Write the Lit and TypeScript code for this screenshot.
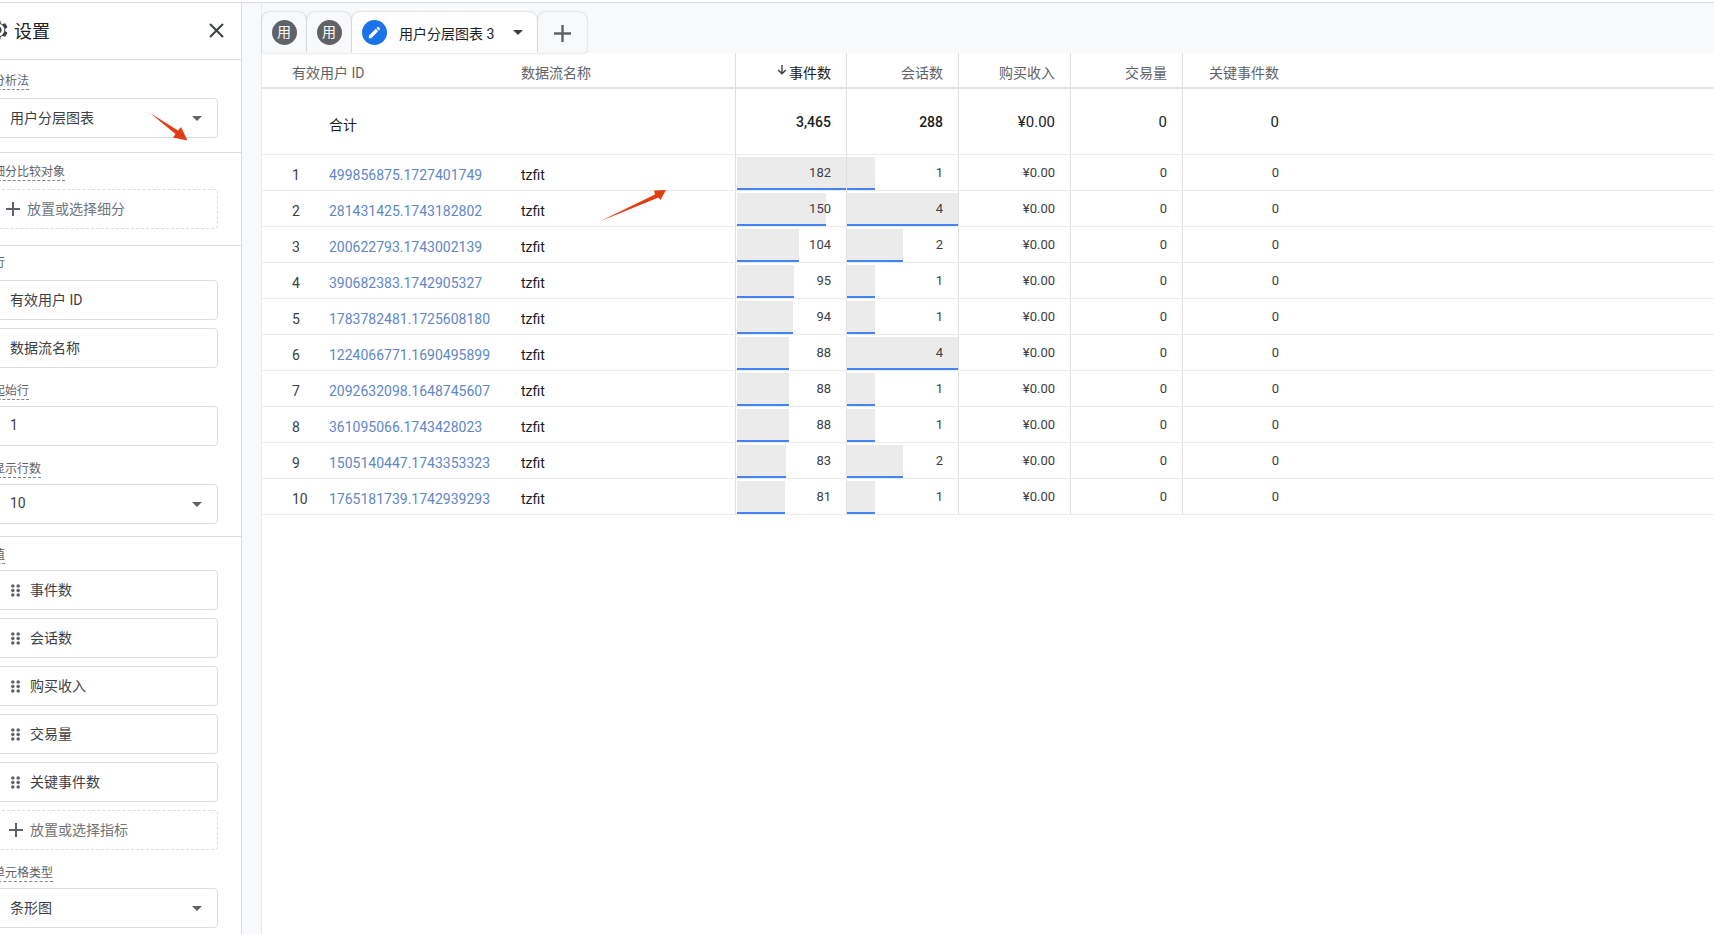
import { LitElement, html, css, svg } from "lit";
import { customElement } from "lit/decorators.js";

const rows: [string, number, number][] = [
  ["499856875.1727401749", 182, 1],
  ["281431425.1743182802", 150, 4],
  ["200622793.1743002139", 104, 2],
  ["390682383.1742905327", 95, 1],
  ["1783782481.1725608180", 94, 1],
  ["1224066771.1690495899", 88, 4],
  ["2092632098.1648745607", 88, 1],
  ["361095066.1743428023", 88, 1],
  ["1505140447.1743353323", 83, 2],
  ["1765181739.1742939293", 81, 1],
];

const caret = html`<svg class="caret" width="10" height="5" viewBox="0 0 10 5"><path d="M0 0h10L5 5z" fill="currentColor"/></svg>`;
const plus = html`<svg class="plus" width="14" height="14" viewBox="0 0 14 14"><path d="M6 0h2v6h6v2H8v6H6V8H0V6h6z" fill="currentColor"/></svg>`;
const grip = html`<svg class="grip" width="9" height="13" viewBox="0 0 9 13" fill="#5f6368">
  ${[2, 6.5, 11].map((y) => svg`<circle cx="1.8" cy="${y}" r="1.8"/><circle cx="7.2" cy="${y}" r="1.8"/>`)}
</svg>`;
const gear = html`<svg class="gear" width="24" height="24" viewBox="0 0 24 24"><path fill="#3c4043" d="M19.14 12.94c.04-.3.06-.61.06-.94 0-.32-.02-.64-.07-.94l2.03-1.58c.18-.14.23-.41.12-.61l-1.92-3.32c-.12-.22-.37-.29-.59-.22l-2.39.96c-.5-.38-1.03-.7-1.62-.94l-.36-2.54c-.04-.24-.24-.41-.48-.41h-3.84c-.24 0-.43.17-.47.41l-.36 2.54c-.59.24-1.13.57-1.62.94l-2.39-.96c-.22-.08-.47 0-.59.22L2.74 8.87c-.12.21-.08.47.12.61l2.03 1.58c-.05.3-.09.63-.09.94s.02.64.07.94l-2.03 1.58c-.18.14-.23.41-.12.61l1.92 3.32c.12.22.37.29.59.22l2.39-.96c.5.38 1.03.7 1.62.94l.36 2.54c.05.24.24.41.48.41h3.84c.24 0 .44-.17.47-.41l.36-2.54c.59-.24 1.13-.56 1.62-.94l2.39.96c.22.08.47 0 .59-.22l1.92-3.32c.12-.22.07-.47-.12-.61l-2.01-1.58z"/><circle cx="12" cy="12" r="6.4" fill="#fff"/><circle cx="12" cy="12" r="3.6" fill="#3c4043"/><circle cx="12" cy="12" r="1.8" fill="#fff"/></svg>`;

@customElement("app-root")
export class AppRoot extends LitElement {
  static styles = css`
    :host {
      display: block;
      width: 1714px;
      height: 934px;
      overflow: hidden;
      position: relative;
      background: #fff;
      font-family: Roboto, "Noto Sans CJK SC", sans-serif;
      font-size: 14px;
      color: #3c4043;
    }
    .page {
      display: flex;
      height: 931px;
      margin-top: 2px;
      border-top: 1px solid #dadce0;
    }
    .sidebar {
      width: 241px;
      flex: none;
      overflow: hidden;
      border-right: 1px solid #dadce0;
      background: #fff;
    }
    .inner {
      margin-left: -7px;
      width: 225px;
      padding-right: 23px;
    }
    .head {
      height: 54px;
      padding-bottom: 2px;
      display: flex;
      align-items: center;
      gap: 4px;
      margin-right: -23px;
      padding-right: 17px;
      border-bottom: 1px solid #dadce0;
      font-size: 18px;
      color: #202124;
    }
    .gear {
      margin-left: -7px;
      flex: none;
    }
    .close {
      margin-left: auto;
      flex: none;
    }
    .sec {
      margin-right: -23px;
      padding-right: 23px;
      border-bottom: 1px solid #dadce0;
    }
    .sec:last-child {
      border-bottom: 0;
    }
    .label {
      display: block;
      width: fit-content;
      height: 16px;
      line-height: 16px;
      font-size: 12px;
      color: #5f6368;
      border-bottom: 1px dashed #80868b;
    }
    .label.plain {
      border-bottom: 1px solid transparent;
    }
    .s1 { padding-top: 13px; padding-bottom: 14px; }
    .s2 { padding-top: 11px; padding-bottom: 16px; }
    .s3 { padding-top: 9px; padding-bottom: 12px; }
    .s4 { padding-top: 10px; }
    .box {
      box-sizing: border-box;
      height: 40px;
      display: flex;
      align-items: center;
      padding: 0 15px 3px 16px;
      border: 1px solid #dadce0;
      border-radius: 4px;
      margin-top: 8px;
      color: #3c4043;
    }
    .box.dash {
      border-style: dashed;
      color: #70757a;
    }
    .box.lead { margin-top: 6px; }
    .box.tight { margin-top: 6px; }
    .label.gap { margin-top: 15px; }
    .caret {
      margin-left: auto;
      margin-top: 3px;
      color: #5f6368;
      flex: none;
    }
    .plus {
      color: #5f6368;
      margin: 3px 7px 0 -4px;
      flex: none;
    }
    .box.metric .plus {
      margin-left: -1px;
    }
    .grip {
      margin: 3px 10px 0 1px;
      flex: none;
    }
    .gutter {
      width: 19px;
      flex: none;
      background: #f8f9fa;
    }
    .main {
      flex: 1;
      min-width: 0;
      border-left: 1px solid #e8eaed;
    }
    .tabs {
      height: 50px;
      box-sizing: border-box;
      padding-top: 9px;
      display: flex;
      gap: 1px;
      background: #f8f9fa;
    }
    .tab {
      box-sizing: border-box;
      height: 41px;
      width: 44px;
      display: flex;
      align-items: center;
      justify-content: center;
      border-radius: 8px 8px 0 0;
      background: #f8f9fa;
      box-shadow: 0 0 2px rgba(60, 64, 67, 0.35);
    }
    .tab.active {
      width: 185px;
      background: #fff;
      justify-content: flex-start;
      padding-left: 10px;
      color: #202124;
    }
    .tab.add {
      width: 49px;
      color: #5f6368;
      border-radius: 8px 8px 4px 0;
    }
    .tab.add svg {
      width: 17px;
      height: 17px;
      margin: 2px 0 0;
    }
    .badge {
      width: 25px;
      height: 25px;
      border-radius: 50%;
      background: #5f6368;
      color: #fff;
      font-size: 14px;
      line-height: 25px;
      text-align: center;
      flex: none;
    }
    .badge.blue {
      background: #1a73e8;
      display: flex;
      align-items: center;
      justify-content: center;
    }
    .tabname {
      margin-left: 12px;
      line-height: 20px;
      padding-top: 2px;
    }
    .tab.active .caret {
      margin-left: 19px;
      margin-top: 0;
      color: #3c4043;
    }
    .row {
      display: grid;
      grid-template-columns: 30px 37px 192px 214px 111px 112px 112px 112px 112px 1fr;
      box-sizing: border-box;
      height: 36px;
      border-bottom: 1px solid #ebebeb;
    }
    .row.header {
      border-bottom: 2px solid #e4e4e4;
      color: #5f6368;
    }
    .row.total {
      height: 66px;
      color: #202124;
    }
    .c {
      display: flex;
      align-items: center;
      white-space: nowrap;
      min-width: 0;
      position: relative;
      box-sizing: border-box;
    }
    .span-id { grid-column: 1 / 4; padding-left: 30px; }
    .span-tot { grid-column: 2 / 5; padding-left: 37px; padding-top: 4px; }
    .txt { padding-top: 4px; }
    .row.header .c { padding-top: 4px; }
    .idxv { color: #3c4043; }
    .link { color: #5f87c8; }
    .strm { color: #202124; }
    .num {
      justify-content: flex-end;
      border-left: 1px solid #e0e0e0;
      padding-right: 15px;
      font-size: 13px;
      color: #3c4043;
    }
    .row.header .num { font-size: 14px; color: #5f6368; }
    .row.header .num.sorted { color: #202124; }
    .row.total .num { font-size: 14px; font-weight: 500; color: #202124; }
    .row.total .num.wide { font-size: 15px; font-weight: 400; }
    .sort {
      margin-right: 2px;
      margin-top: -5px;
    }
    .bar {
      position: absolute;
      left: 0;
      top: 2px;
      bottom: 0;
      background: #ebebeb;
      border-bottom: 2px solid #4285f4;
      box-sizing: border-box;
    }
    .bar.offset { left: 1px; }
    .val { position: relative; }
    .ann {
      position: absolute;
      left: 0;
      top: 0;
      width: 1714px;
      height: 934px;
      pointer-events: none;
    }
  `;

  private metric(v: string | number, w?: number, offset = false, wide = false) {
    return html`<div class="c num ${wide ? "wide" : ""}">
      ${w !== undefined ? html`<div class="bar ${offset ? "offset" : ""}" style="width:${w}px"></div>` : ""}
      <span class="val">${v}</span>
    </div>`;
  }

  render() {
    return html`
      <div class="page">
        <aside class="sidebar">
          <div class="inner">
            <div class="head">
              ${gear}<span>设置</span>
              <svg class="close" width="15" height="15" viewBox="0 0 15 15"><path d="M1 1l13 13M14 1L1 14" stroke="#3c4043" stroke-width="2" fill="none"/></svg>
            </div>
            <div class="sec s1">
              <span class="label">分析法</span>
              <div class="box">用户分层图表${caret}</div>
            </div>
            <div class="sec s2">
              <span class="label">细分比较对象</span>
              <div class="box dash">${plus}放置或选择细分</div>
            </div>
            <div class="sec s3">
              <span class="label plain">行</span>
              <div class="box">有效用户 ID</div>
              <div class="box">数据流名称</div>
              <span class="label gap">起始行</span>
              <div class="box tight">1</div>
              <span class="label gap">显示行数</span>
              <div class="box tight">10${caret}</div>
            </div>
            <div class="sec s4">
              <span class="label">值</span>
              ${["事件数", "会话数", "购买收入", "交易量", "关键事件数"].map(
                (t, i) => html`<div class="box ${i === 0 ? "lead" : ""}">${grip}${t}</div>`
              )}
              <div class="box dash metric">${plus}放置或选择指标</div>
              <span class="label gap">单元格类型</span>
              <div class="box tight">条形图${caret}</div>
            </div>
          </div>
        </aside>
        <div class="gutter"></div>
        <section class="main">
          <div class="tabs">
            <div class="tab"><span class="badge">用</span></div>
            <div class="tab"><span class="badge">用</span></div>
            <div class="tab active">
              <span class="badge blue"><svg width="15" height="15" viewBox="0 0 24 24"><path fill="#fff" d="M3 17.25V21h3.75L17.81 9.94l-3.75-3.75L3 17.25zM20.71 7.04a1 1 0 0 0 0-1.41l-2.34-2.34a1 1 0 0 0-1.41 0l-1.83 1.83 3.75 3.75 1.83-1.83z"/></svg></span>
              <span class="tabname">用户分层图表 3</span>${caret}
            </div>
            <div class="tab add">${plus}</div>
          </div>
          <div class="row header">
            <div class="c span-id">有效用户 ID</div>
            <div class="c">数据流名称</div>
            <div class="c num sorted">
              <svg class="sort" width="10" height="10" viewBox="0 0 10 10"><path d="M4.3 0h1.4v7l2.6-2.6 1 1L5 9.8.7 5.4l1-1L4.3 7z" fill="#3c4043"/></svg>
              事件数
            </div>
            <div class="c num">会话数</div>
            <div class="c num">购买收入</div>
            <div class="c num">交易量</div>
            <div class="c num">关键事件数</div>
            <div class="c"></div>
          </div>
          <div class="row total">
            <div class="c"></div>
            <div class="c span-tot">合计</div>
            ${this.metric("3,465")}${this.metric("288")}${this.metric("¥0.00", undefined, false, true)}${this.metric("0", undefined, false, true)}${this.metric("0", undefined, false, true)}
            <div class="c"></div>
          </div>
          ${rows.map(
            ([id, ev, se], i) => html`<div class="row">
              <div class="c"></div>
              <div class="c"><span class="txt idxv">${i + 1}</span></div>
              <div class="c"><span class="txt link">${id}</span></div>
              <div class="c"><span class="txt strm">tzfit</span></div>
              ${this.metric(ev, (ev / 182) * 108.5, true)}
              ${this.metric(se, (se / 4) * 111)}
              ${this.metric("¥0.00")}${this.metric(0)}${this.metric(0)}
              <div class="c"></div>
            </div>`
          )}
        </section>
      </div>
      <svg class="ann" viewBox="0 0 1714 934">
        <path fill="#e23d12" d="M150 113L178 130.5L181 127L187.5 140.5L173 137.5L175.5 134z"/>
        <path fill="#e23d12" d="M599.5 221.5L655 194.5L654 190.5L666 190L660.5 200L658.5 197.5z"/>
      </svg>
    `;
  }
}
